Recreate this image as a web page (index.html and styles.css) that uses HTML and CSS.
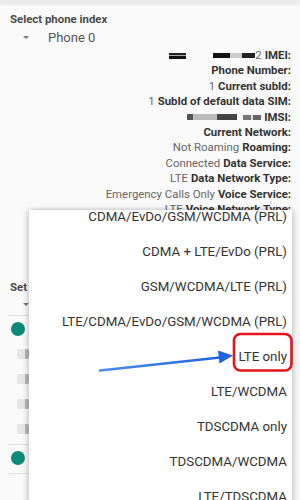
FILE: index.html
```html
<!DOCTYPE html>
<html>
<head>
<meta charset="utf-8">
<link rel="stylesheet" href="styles.css">
</head>
<body>
<div class="topbar"></div>
<div class="page">
  <div class="section-title">Select phone index</div>
  <div class="spinner"><span class="caret"></span><span class="spin-val">Phone 0</span></div>
  <div class="info">
    <div class="row"><span class="redact r1"></span><span class="redact r2"></span><span class="val">2</span> <b>IMEI:</b></div>
    <div class="row"><b>Phone Number:</b></div>
    <div class="row"><span class="val">1</span> <b>Current subId:</b></div>
    <div class="row"><span class="val">1</span> <b>SubId of default data SIM:</b></div>
    <div class="row"><span class="redact r3"></span><span class="redact r4"></span> <b>IMSI:</b></div>
    <div class="row"><b>Current Network:</b></div>
    <div class="row"><span class="val">Not Roaming</span> <b>Roaming:</b></div>
    <div class="row"><span class="val">Connected</span> <b>Data Service:</b></div>
    <div class="row"><span class="val">LTE</span> <b>Data Network Type:</b></div>
    <div class="row"><span class="val">Emergency Calls Only</span> <b>Voice Service:</b></div>
    <div class="row"><span class="val">LTE</span> <b>Voice Network Type:</b></div>
  </div>
  <div class="section-title set">Set preferred network type:</div>
  <div class="spinner small"><span class="caret"></span></div>
  <div class="divider"></div>
  <div class="opt"><span class="radio"></span></div>
  <div class="opt"><span class="switch"></span></div>
  <div class="opt"><span class="switch"></span></div>
  <div class="opt"><span class="switch"></span></div>
  <div class="opt"><span class="switch"></span></div>
  <div class="divider"></div>
  <div class="opt"><span class="radio"></span></div>
  <div class="divider"></div>
</div>

<div class="menu">
  <ul class="menu-list">
    <li>CDMA/EvDo/GSM/WCDMA (PRL)</li>
    <li>CDMA + LTE/EvDo (PRL)</li>
    <li>GSM/WCDMA/LTE (PRL)</li>
    <li>LTE/CDMA/EvDo/GSM/WCDMA (PRL)</li>
    <li>LTE only</li>
    <li>LTE/WCDMA</li>
    <li>TDSCDMA only</li>
    <li>TDSCDMA/WCDMA</li>
    <li>LTE/TDSCDMA</li>
  </ul>
</div>

<svg class="annot" width="300" height="500" viewBox="0 0 300 500">
  <defs>
    <linearGradient id="ag" x1="0" y1="0" x2="1" y2="0">
      <stop offset="0" stop-color="#4a8ff0"/>
      <stop offset="1" stop-color="#1f63d8"/>
    </linearGradient>
  </defs>
  <path d="M100 370.5 L220 357.5" stroke="url(#ag)" stroke-width="2.6" stroke-linecap="round" fill="none"/>
  <path d="M218 350.5 L233 355.5 L219.5 363.5 Z" fill="#1f63d8"/>
  <rect x="234" y="334" width="57.5" height="36.5" rx="6.5" ry="6.5" fill="none" stroke="#e3141b" stroke-width="2.6"/>
</svg>
</body>
</html>
```
FILE: styles.css
```css
html, body {
  margin: 0;
  padding: 0;
}
body {
  width: 300px;
  height: 500px;
  overflow: hidden;
  background: #fafafa;
  font-family: Roboto, "Liberation Sans", sans-serif;
  position: relative;
}
.topbar {
  height: 4px;
  background: #ececec;
  box-shadow: 0 1px 2px rgba(0,0,0,0.06);
}
.page {
  padding: 7px 9px 0 10px;
}
.section-title {
  font-size: 11.4px;
  font-weight: 700;
  color: #4a4a4a;
  line-height: 17px;
}
.spinner {
  display: flex;
  align-items: center;
  height: 19px;
  padding-left: 13px;
}
.caret {
  width: 0;
  height: 0;
  border-left: 3px solid transparent;
  border-right: 3px solid transparent;
  border-top: 3px solid #777;
}
.spin-val {
  margin-left: 19px;
  font-size: 13px;
  color: #555;
}
.info {
  margin-top: 1px;
  display: flex;
  flex-direction: column;
  align-items: flex-end;
}
.row {
  font-size: 11.4px;
  line-height: 15.4px;
  height: 15.4px;
  color: #333;
  white-space: nowrap;
  display: flex;
  align-items: center;
}
.row b {
  font-weight: 700;
  color: #333;
  margin-left: 3px;
}
.row .val {
  color: #666;
}
.redact {
  display: inline-block;
  height: 6px;
}
.r1 {
  width: 17px;
  margin-right: 27px;
  background: linear-gradient(#222 0 30%, #aaa 30% 45%, #111 45% 100%);
}
.r2 {
  width: 42px;
  background: linear-gradient(90deg, #111 0 40%, #ccc 40% 70%, #222 70% 100%);
  height: 5px;
}
.r3 {
  width: 50px;
  margin-right: 6px;
  height: 6px;
  background: linear-gradient(90deg, #555 0 12%, #bbb 12% 60%, #444 60% 100%);
}
.r4 {
  width: 18px;
  height: 5px;
  background: linear-gradient(90deg, #777 0 45%, #ddd 45% 55%, #666 55% 100%);
}
.set {
  margin-top: 62px;
}
.spinner.small {
  height: 16px;
}
.divider {
  height: 1px;
  background: #e4e4e4;
  margin: 3px 0 0 -2px;
}
.opt {
  height: 25px;
  display: flex;
  align-items: center;
  padding-left: 1px;
}
.radio {
  width: 14px;
  height: 14px;
  border-radius: 50%;
  background: #0a8a77;
}
.switch {
  width: 12px;
  height: 10px;
  margin-left: 6px;
  background: linear-gradient(90deg, #e6e6e6 0 70%, #b8b8b8 70% 100%);
  border-radius: 2px;
}
.menu {
  position: absolute;
  left: 29px;
  top: 210px;
  width: 263px;
  height: 300px;
  background: #fff;
  overflow: hidden;
  box-shadow: -2px 0 5px rgba(0,0,0,0.18), 3px 0 5px rgba(0,0,0,0.14);
}
.menu-list {
  list-style: none;
  margin: -11px 0 0 0;
  padding: 0;
}
.menu-list li {
  height: 35px;
  line-height: 35px;
  text-align: right;
  padding-right: 5px;
  font-size: 13.3px;
  color: #333;
  white-space: nowrap;
}
.annot {
  position: absolute;
  left: 0;
  top: 0;
  pointer-events: none;
}
```
